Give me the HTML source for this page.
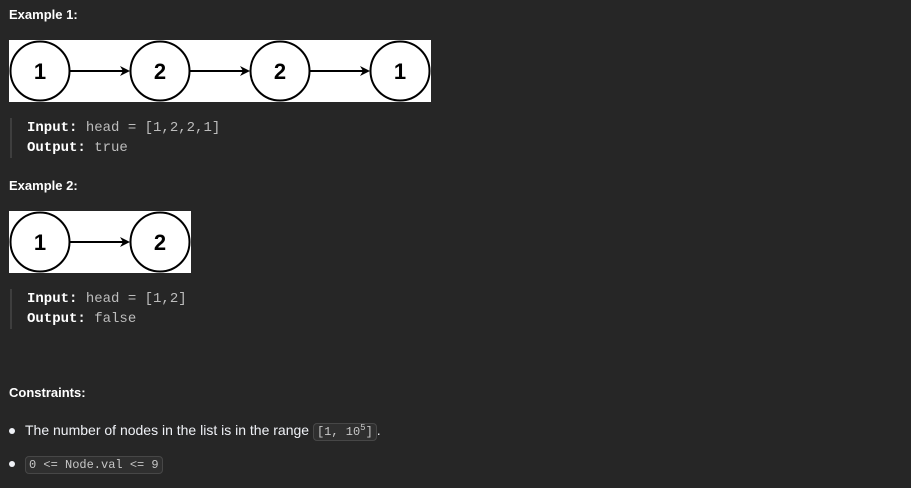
<!DOCTYPE html>
<html><head><style>
body{margin:0;width:911px;height:488px;background:#262626;color:#eff1f6;font-family:"Liberation Sans",sans-serif;position:relative;overflow:hidden}
.a{position:absolute}
.h{font-weight:bold;font-size:13px;color:#fff}
.bq{border-left:2px solid #3e3e3e;padding-left:15px;font-family:"Liberation Mono",monospace;font-size:14px;line-height:20px;color:#bdbdbd}
.bq b{color:#fff}
.li{font-size:14px;color:#eff1f6}
.code{font-family:"Liberation Mono",monospace;font-size:12px;background:#2f2f2f;border:1px solid #474747;border-radius:4px;padding:1px 3px;color:#c7c7c7}
.dot{position:absolute;width:6px;height:6px;border-radius:3px;background:#eff1f6}
</style></head><body>
<div class="a h" style="left:9px;top:7px">Example 1:</div>
<svg class="a" style="left:9px;top:40px" width="422" height="62" viewBox="0 0 422 62">
<rect width="422" height="62" fill="#fff"/>
<g fill="none" stroke="#000" stroke-width="2">
<circle cx="31" cy="31" r="29.5"/><circle cx="151" cy="31" r="29.5"/><circle cx="271" cy="31" r="29.5"/><circle cx="391" cy="31" r="29.5"/>
<line x1="61" y1="31" x2="116" y2="31"/><line x1="181" y1="31" x2="236" y2="31"/><line x1="301" y1="31" x2="356" y2="31"/>
</g>
<g fill="#000"><path d="M121 31 l-10 -5 l3 5 l-3 5z"/><path d="M241 31 l-10 -5 l3 5 l-3 5z"/><path d="M361 31 l-10 -5 l3 5 l-3 5z"/></g>
<g font-family="Liberation Sans" font-weight="bold" font-size="22" text-anchor="middle">
<text x="31" y="39">1</text><text x="151" y="39">2</text><text x="271" y="39">2</text><text x="391" y="39">1</text></g>
</svg>
<div class="a bq" style="left:10px;top:118px"><b>Input:</b> head = [1,2,2,1]<br><b>Output:</b> true</div>
<div class="a h" style="left:9px;top:178px">Example 2:</div>
<svg class="a" style="left:9px;top:211px" width="182" height="62" viewBox="0 0 182 62">
<rect width="182" height="62" fill="#fff"/>
<g fill="none" stroke="#000" stroke-width="2">
<circle cx="31" cy="31" r="29.5"/><circle cx="151" cy="31" r="29.5"/>
<line x1="61" y1="31" x2="116" y2="31"/></g>
<path d="M121 31 l-10 -5 l3 5 l-3 5z" fill="#000"/>
<g font-family="Liberation Sans" font-weight="bold" font-size="22" text-anchor="middle">
<text x="31" y="39">1</text><text x="151" y="39">2</text></g>
</svg>
<div class="a bq" style="left:10px;top:289px"><b>Input:</b> head = [1,2]<br><b>Output:</b> false</div>
<div class="a h" style="left:9px;top:385px">Constraints:</div>
<div class="dot" style="left:9px;top:428px"></div>
<div class="a li" style="left:25px;top:422px">The number of nodes in the list is in the range <span class="code">[1, 10<sup style="font-size:9px">5</sup>]</span>.</div>
<div class="dot" style="left:9px;top:461px"></div>
<div class="a li" style="left:25px;top:455px"><span class="code">0 &lt;= Node.val &lt;= 9</span></div>
</body></html>
